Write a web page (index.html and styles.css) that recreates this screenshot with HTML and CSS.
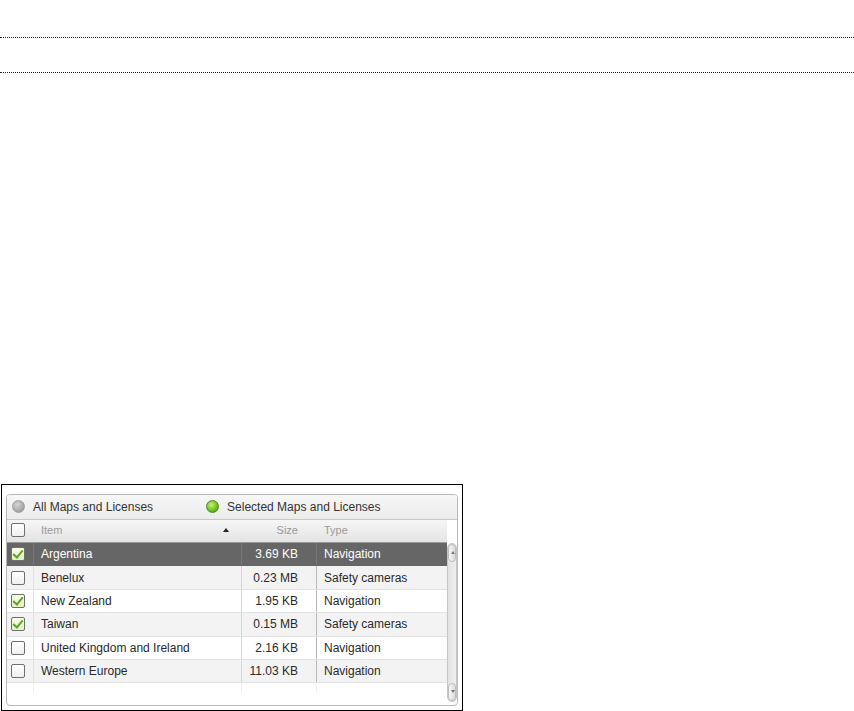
FILE: index.html
```html
<!DOCTYPE html>
<html lang="en">
<head>
  <meta charset="UTF-8">
  <title>Maps and Licenses</title>
  <link rel="stylesheet" href="styles.css">
</head>
<body>

<div class="rule rule-top"></div>
<div class="rule rule-bottom"></div>

<div class="frame">
  <div class="panel">
    <div class="filter-bar">
      <label class="radio"><span class="dot"></span>All Maps and Licenses</label>
      <label class="radio"><span class="dot on"></span>Selected Maps and Licenses</label>
    </div>

    <div class="grid-wrap">
      <div class="grid">
        <div class="row head">
          <div class="cell c-check"><span class="box"></span></div>
          <div class="cell c-item">Item<span class="sort"></span></div>
          <div class="cell c-size">Size</div>
          <div class="cell c-type">Type</div>
        </div>

        <div class="row selected">
          <div class="cell c-check"><span class="box checked"></span></div>
          <div class="cell c-item">Argentina</div>
          <div class="cell c-size">3.69 KB</div>
          <div class="cell c-type">Navigation</div>
        </div>
        <div class="row alt">
          <div class="cell c-check"><span class="box"></span></div>
          <div class="cell c-item">Benelux</div>
          <div class="cell c-size">0.23 MB</div>
          <div class="cell c-type">Safety cameras</div>
        </div>
        <div class="row">
          <div class="cell c-check"><span class="box checked"></span></div>
          <div class="cell c-item">New Zealand</div>
          <div class="cell c-size">1.95 KB</div>
          <div class="cell c-type">Navigation</div>
        </div>
        <div class="row alt">
          <div class="cell c-check"><span class="box checked"></span></div>
          <div class="cell c-item">Taiwan</div>
          <div class="cell c-size">0.15 MB</div>
          <div class="cell c-type">Safety cameras</div>
        </div>
        <div class="row">
          <div class="cell c-check"><span class="box"></span></div>
          <div class="cell c-item">United Kingdom and Ireland</div>
          <div class="cell c-size">2.16 KB</div>
          <div class="cell c-type">Navigation</div>
        </div>
        <div class="row alt">
          <div class="cell c-check"><span class="box"></span></div>
          <div class="cell c-item">Western Europe</div>
          <div class="cell c-size">11.03 KB</div>
          <div class="cell c-type">Navigation</div>
        </div>
        <div class="row filler">
          <div class="cell c-check"></div>
          <div class="cell c-item"></div>
          <div class="cell c-size"></div>
          <div class="cell c-type"></div>
        </div>
      </div>

      <div class="scrollbar">
        <div class="sb-btn up"></div>
        <div class="sb-track"></div>
        <div class="sb-btn down"></div>
      </div>
    </div>
  </div>
</div>

</body>
</html>
```

FILE: styles.css
```css
* {
  box-sizing: border-box;
  margin: 0;
  padding: 0;
}

body {
  background: #fff;
  font-family: 'Liberation Sans', Arial, sans-serif;
  font-size: 12px;
  color: #2a2a2a;
}

.rule {
  border-top: 1px dotted #222;
}

.rule-top {
  margin-top: 37px;
}

.rule-bottom {
  margin-top: 34px;
}

.frame {
  margin: 411px 0 0 1px;
  width: 462px;
  height: 227px;
  border: 1px solid #000;
  padding: 9px 4px 4px 4px;
}

.panel {
  height: 100%;
  border: 1px solid #b9b9b9;
  border-radius: 4px;
  background: #fff;
  display: flex;
  flex-direction: column;
  overflow: hidden;
}

.filter-bar {
  height: 25px;
  background: linear-gradient(#f7f7f7, #ececec);
  border-bottom: 1px solid #c8c8c8;
  display: flex;
  align-items: center;
  padding: 0 0 1px 5px;
  color: #333;
}

.radio {
  display: flex;
  align-items: center;
  gap: 8px;
}

.radio + .radio {
  margin-left: 53px;
}

.dot {
  width: 13px;
  height: 13px;
  border-radius: 50%;
  background: radial-gradient(circle at 40% 35%, #d4d4d4, #a4a4a4 70%, #8c8c8c);
  border: 1px solid #a0a0a0;
}

.dot.on {
  background: radial-gradient(circle at 40% 35%, #c8f07a, #6cbf1c 60%, #3f8a08);
  border-color: #4e8d18;
}

.grid-wrap {
  flex: 1;
  display: flex;
  min-height: 0;
}

.grid {
  width: 440px;
  display: flex;
  flex-direction: column;
}

.row {
  display: flex;
  height: 23.4px;
  flex-shrink: 0;
  border-bottom: 1px solid #e2e2e2;
}

.row.head {
  height: 23px;
  background: linear-gradient(#f6f6f6, #e4e4e4);
  border-bottom: 1px solid #9a9a9a;
  color: #9a9a9a;
  font-size: 11px;
  padding-bottom: 2px;
}

.row.alt {
  background: #f3f3f3;
}

.row.selected {
  background: #666;
  color: #fff;
  border-bottom-color: #666;
}

.row.filler {
  flex: 1;
  border-bottom: none;
}

.cell {
  display: flex;
  align-items: center;
  white-space: nowrap;
}

.c-check {
  width: 27px;
  padding-left: 4px;
  border-right: 1px solid #e2e2e2;
}

.c-item {
  width: 208px;
  padding-left: 7px;
  border-right: 1px solid #d4d4d4;
  position: relative;
}

.c-size {
  width: 75px;
  justify-content: flex-end;
  padding-right: 18px;
  border-right: 1px solid #b8b8b8;
}

.c-type {
  width: 130px;
  padding-left: 7px;
}

.row.head .c-check,
.row.head .c-item,
.row.head .c-size {
  border-right-color: transparent;
}

.row.selected .cell {
  border-right-color: #777;
}

.row.filler .cell {
  border-right-color: #f0f0f0;
  margin-bottom: 12px;
}

.sort {
  position: absolute;
  right: 12px;
  top: 8px;
  border-left: 3px solid transparent;
  border-right: 3px solid transparent;
  border-bottom: 4px solid #222;
}

.box {
  width: 14px;
  height: 14px;
  border: 1px solid #6f6f6f;
  border-radius: 2px;
  background: linear-gradient(#fff, #f0f0f0);
  position: relative;
}

.box.checked {
  background: linear-gradient(#fafde8, #e6efc4);
}

.box.checked::after {
  content: "";
  position: absolute;
  left: 3px;
  top: 0px;
  width: 4px;
  height: 8px;
  border-right: 2px solid #5fa428;
  border-bottom: 2px solid #5fa428;
  transform: rotate(40deg);
}

.scrollbar {
  width: 11px;
  margin-top: 23px;
  margin-bottom: 3px;
  display: flex;
  flex-direction: column;
  background: #e8e8e8;
  border: 1px solid #c6c6c6;
  border-radius: 5px;
}

.sb-btn {
  height: 18px;
  border-radius: 5px;
  background: linear-gradient(90deg, #f6f6f6, #dcdcdc);
  border: 1px solid #bdbdbd;
  position: relative;
}

.sb-btn::after {
  content: "";
  position: absolute;
  left: 2px;
  top: 6px;
  border-left: 2.5px solid transparent;
  border-right: 2.5px solid transparent;
}

.sb-btn.up::after {
  border-bottom: 3px solid #777;
}

.sb-btn.down::after {
  border-top: 3px solid #777;
}

.sb-track {
  flex: 1;
  background: linear-gradient(90deg, #e2e2e2, #efefef);
}
```
